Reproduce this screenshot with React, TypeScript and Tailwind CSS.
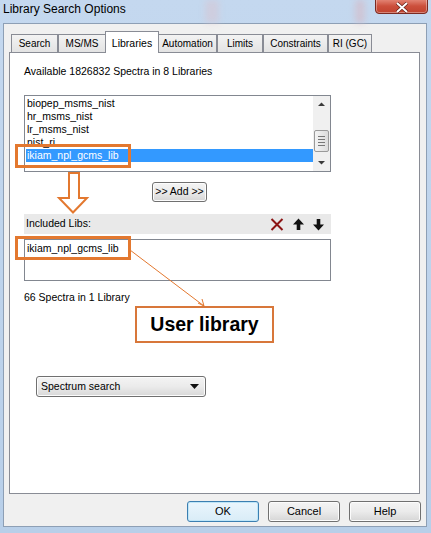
import React from "react";

const UI = { fontFamily: '"Liberation Sans", Arial, sans-serif' };

function Tab({ label, w, selected }: { label: string; w: number; selected?: boolean }) {
  if (selected) {
    return (
      <div
        className="relative z-10 -mb-px flex h-[22px] items-start justify-center border border-b-0 border-[#898c95] bg-white pt-[4px] text-[10.5px] text-black -mx-[1px]"
        style={{ width: w + 2 }}
      >
        {label}
      </div>
    );
  }
  return (
    <div
      className="flex h-[18px] items-center justify-center border border-b-0 border-[#898c95] bg-gradient-to-b from-[#f3f3f3] to-[#e3e3e3] text-[10px] text-black"
      style={{ width: w }}
    >
      {label}
    </div>
  );
}

function WinButton({ label, w, def }: { label: string; w: number; def?: boolean }) {
  return (
    <div
      className={
        "flex h-[21px] items-center justify-center rounded-[3px] border text-[11px] text-black " +
        (def
          ? "border-[#3c7fb1] bg-gradient-to-b from-[#eaf6fd] to-[#d9ecf7] shadow-[inset_0_0_0_1px_#bfe6f8]"
          : "border-[#707070] bg-gradient-to-b from-[#f4f4f4] via-[#ebebeb] to-[#d6d6d6] shadow-[inset_0_0_0_1px_#fcfcfc]")
      }
      style={{ width: w }}
    >
      {label}
    </div>
  );
}

export default function App() {
  const ORANGE = "#e3782f";
  return (
    <div className="relative flex h-[533px] w-[431px] flex-col overflow-hidden bg-gradient-to-b from-[#c4d8ef] to-[#b8cfe9]" style={UI}>
      {/* Title bar */}
      <div className="relative h-[23px] w-full">
        <div className="absolute left-[205px] top-0 h-[23px] w-[14px] bg-[#d9c4cf] opacity-50 blur-[3px]" />
        <div className="absolute left-[355px] top-0 h-[23px] w-[10px] bg-[#d7b9c4] opacity-60 blur-[3px]" />
        <div className="relative pl-[3px] pt-[2px] text-[12px] leading-[15px] text-black">Library Search Options</div>
        <div className="absolute left-[375px] top-[-2px] flex h-[16px] w-[53px] items-center justify-center rounded-b-[4px] border border-[#7a2a22] bg-gradient-to-b from-[#e58a7b] via-[#cc4f3c] to-[#b8382700] shadow-[inset_0_0_0_1px_rgba(255,255,255,0.35)]" style={{ backgroundColor: "#c0432f" }}>
          <svg width="14" height="11" viewBox="0 0 14 11" className="mt-[2px]">
            <path d="M2 1 L12 10 M12 1 L2 10" stroke="#5a1a14" strokeWidth="3.2" />
            <path d="M2 1 L12 10 M12 1 L2 10" stroke="#ffffff" strokeWidth="2" />
          </svg>
        </div>
      </div>

      {/* Body */}
      <div className="ml-[3px] flex h-[504px] w-[424px] flex-col border border-[#8d9fb5] bg-[#f0f0f0]">
        {/* Tabs */}
        <div className="mt-[7px] flex h-[21px] items-end pl-[7px]">
          <Tab label="Search" w={47} />
          <Tab label="MS/MS" w={48} />
          <Tab label="Libraries" w={52} selected />
          <Tab label="Automation" w={59} />
          <Tab label="Limits" w={46} />
          <Tab label="Constraints" w={65} />
          <Tab label="RI (GC)" w={44} />
        </div>

        {/* Panel */}
        <div className="relative ml-[5px] h-[442px] w-[411px] border border-[#898c95] bg-white">
          <div className="pl-[14px] pt-[11px]">
            <div className="h-[14px] text-[10.5px] leading-[14px] text-black">Available 1826832 Spectra in 8 Libraries</div>

            {/* Available list */}
            <div className="mt-[17px] flex h-[77px] w-[307px] border border-[#828790] bg-white">
              <div className="flex-1 pl-[1px] pt-[1px] text-[10.5px] text-black">
                <div className="h-[13px] pl-[1px] leading-[13px]">biopep_msms_nist</div>
                <div className="h-[13px] pl-[1px] leading-[13px]">hr_msms_nist</div>
                <div className="h-[13px] pl-[1px] leading-[13px]">lr_msms_nist</div>
                <div className="h-[13px] pl-[1px] leading-[13px]">nist_ri</div>
                <div className="h-[13px] bg-[#3399ff] pl-[1px] leading-[13px] text-white">ikiam_npl_gcms_lib</div>
              </div>
              <div className="flex w-[17px] flex-col items-center bg-[#f0f0f0]">
                <svg width="17" height="17" viewBox="0 0 17 17">
                  <path d="M5 10 L8.5 6.5 L12 10 Z" fill="#3a3a3a" />
                </svg>
                <div className="mt-[17px] flex h-[22px] w-[15px] flex-col items-center justify-center gap-[2px] rounded-[2px] border border-[#9a9a9a] bg-gradient-to-r from-[#f4f4f4] to-[#dcdcdc]">
                  <div className="h-px w-[7px] bg-[#777]" />
                  <div className="h-px w-[7px] bg-[#777]" />
                  <div className="h-px w-[7px] bg-[#777]" />
                  <div className="h-px w-[7px] bg-[#777]" />
                </div>
                <svg width="17" height="17" viewBox="0 0 17 17" className="mt-auto">
                  <path d="M5 7 L8.5 10.5 L12 7 Z" fill="#3a3a3a" />
                </svg>
              </div>
            </div>

            {/* Add button */}
            <div className="ml-[128px] mt-[10px]">
              <div className="flex h-[20px] w-[55px] items-center justify-center rounded-[3px] border border-[#707070] bg-gradient-to-b from-[#f4f4f4] via-[#ebebeb] to-[#d6d6d6] text-[10.5px] text-black shadow-[inset_0_0_0_1px_#fcfcfc]">
                &gt;&gt; Add &gt;&gt;
              </div>
            </div>

            {/* Included header */}
            <div className="mt-[12px] flex h-[20px] w-[307px] items-center bg-[#e9e9e9] pl-[2px] text-[10.5px] text-black">
              <span>Included Libs:</span>
              <div className="ml-auto mr-[7px] flex items-center gap-[9px]">
                <svg width="14" height="13" viewBox="0 0 14 13">
                  <path d="M1.5 1 L12.5 12 M12.5 1 L1.5 12" stroke="#8c1414" strokeWidth="2" />
                </svg>
                <svg width="11" height="13" viewBox="0 0 11 13">
                  <path d="M5.5 0.5 L11 6.5 L7.3 6.5 L7.3 12 L3.7 12 L3.7 6.5 L0 6.5 Z" fill="#111" />
                </svg>
                <svg width="11" height="13" viewBox="0 0 11 13">
                  <path d="M5.5 12.5 L11 6.5 L7.3 6.5 L7.3 1 L3.7 1 L3.7 6.5 L0 6.5 Z" fill="#111" />
                </svg>
              </div>
            </div>

            {/* Included list */}
            <div className="mt-[5px] h-[42px] w-[307px] border border-[#828790] bg-white pl-[2px] pt-[2px] text-[10.5px] leading-[13px] text-black">
              ikiam_npl_gcms_lib
            </div>

            <div className="mt-[9px] h-[14px] text-[10.5px] leading-[14px] text-black">66 Spectra in 1 Library</div>

            {/* Dropdown */}
            <div className="ml-[12px] mt-[72px] flex h-[21px] w-[170px] items-center rounded-[3px] border border-[#707070] bg-gradient-to-b from-[#f4f4f4] via-[#ebebeb] to-[#d8d8d8] pl-[4px] pr-[6px] text-[10.5px] text-black shadow-[inset_0_0_0_1px_#fcfcfc]">
              <span>Spectrum search</span>
              <svg width="9" height="5" viewBox="0 0 9 5" className="ml-auto">
                <path d="M0 0 L9 0 L4.5 5 Z" fill="#111" />
              </svg>
            </div>
          </div>

          {/* Annotations (overlay) */}
          <svg className="pointer-events-none absolute left-[-1px] top-[-1px]" width="411" height="442" viewBox="0 0 411 442">
            <path
              d="M60 121 L70 121 L70 146 L78 146 L64 160.5 L50 146 L60 146 Z"
              fill="white"
              stroke={ORANGE}
              strokeWidth="2"
              strokeLinejoin="miter"
            />
            <path d="M121 198 L195 254" stroke={ORANGE} strokeWidth="1" />
            <path d="M189 251 L195 254 L193 247" stroke={ORANGE} strokeWidth="1" fill="none" />
          </svg>
          <div className="pointer-events-none absolute left-[5px] top-[91px] h-[24px] w-[116px] border-[3px] border-[#e3782f]" />
          <div className="pointer-events-none absolute left-[5px] top-[183px] h-[24px] w-[116px] border-[3px] border-[#e3782f]" />
          <div className="absolute left-[125px] top-[253px] flex h-[37px] w-[139px] items-center justify-center border-[2px] border-[#d8773a] bg-white text-[19.5px] font-bold text-black" style={{ fontFamily: '"Liberation Sans", Arial, sans-serif' }}>
            User library
          </div>
        </div>

        {/* Bottom buttons */}
        <div className="mt-[7px] flex justify-end gap-[9px] pr-[5px]">
          <WinButton label="OK" w={72} def />
          <WinButton label="Cancel" w={72} />
          <WinButton label="Help" w={72} />
        </div>
      </div>
    </div>
  );
}
